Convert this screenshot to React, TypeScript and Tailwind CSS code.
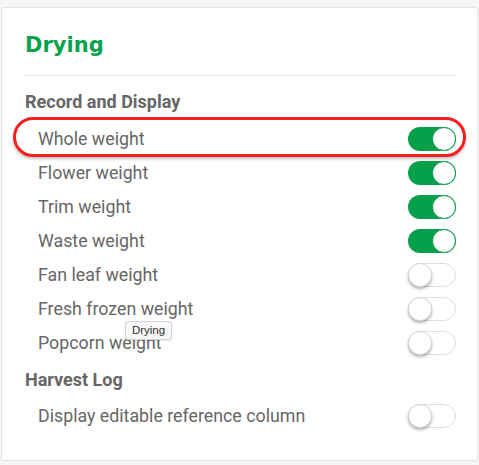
import React from "react";

type Item = { label: string; on: boolean; highlight?: boolean };

const recordItems: Item[] = [
  { label: "Whole weight", on: true, highlight: true },
  { label: "Flower weight", on: true },
  { label: "Trim weight", on: true },
  { label: "Waste weight", on: true },
  { label: "Fan leaf weight", on: false },
  { label: "Fresh frozen weight", on: false },
  { label: "Popcorn weight", on: false },
];

function Toggle({ on }: { on: boolean }) {
  if (on) {
    return (
      <div className="relative h-6 w-12 rounded-full bg-[#06a04b]">
        <div className="absolute right-0 top-0 h-6 w-6 rounded-full border border-[#0b9a48] bg-white" />
      </div>
    );
  }
  return (
    <div className="relative h-6 w-12 rounded-full border border-[#dedede] bg-white">
      <div className="absolute -left-px -top-px h-6 w-6 rounded-full border border-[#d6d6d6] bg-white shadow-[0_2px_3px_rgba(0,0,0,0.3)]" />
    </div>
  );
}

function Row({ item }: { item: Item }) {
  return (
    <div className="relative flex h-[34px] items-center justify-between">
      {item.highlight && (
        <div className="pointer-events-none absolute -bottom-px -left-3 -right-[10px] -top-[5px] rounded-full border-[3.5px] border-[#f51f1f] shadow-[0_2px_3px_rgba(0,0,0,0.25)]" />
      )}
      <span className="pl-[13px] text-[17.8px] text-[#666]">{item.label}</span>
      <Toggle on={item.on} />
    </div>
  );
}

export default function App() {
  return (
    <div
      className="relative min-h-screen bg-[#f6f6f6] px-px pt-[7px]"
      style={{ fontFamily: "Roboto, 'Noto Sans', sans-serif" }}
    >
      <div className="h-[454px] rounded-[3px] border border-[#e4e4e4] bg-white pl-[23px] pr-[21px] pt-[23px]">
        <h1
          className="h-7 text-[21px] font-bold leading-7 text-[#07a24c]"
          style={{ fontFamily: "'DejaVu Sans', sans-serif" }}
        >
          Drying
        </h1>
        <div className="mt-[16px] h-px bg-[#e6e6e6]" />

        <h2 className="mt-2 flex h-[34px] items-center text-[18px] font-bold text-[#666]">
          Record and Display
        </h2>
        <div className="mt-1">
          {recordItems.map((item) => (
            <Row key={item.label} item={item} />
          ))}
        </div>

        <h2 className="mt-[2px] flex h-[34px] items-center text-[18px] font-bold text-[#666]">
          Harvest Log
        </h2>
        <div className="mt-[3px]">
          <Row item={{ label: "Display editable reference column", on: false }} />
        </div>
      </div>

      <div
        className="absolute left-[125px] top-[321px] flex h-[19px] w-[47px] items-center justify-center rounded-[3px] border border-[#d4d4d4] bg-[#f8f8f8] text-[11.5px] text-[#333] shadow-[0_1px_2px_rgba(0,0,0,0.1)]"
        style={{ fontFamily: "'Liberation Sans', Arial, sans-serif" }}
      >
        Drying
      </div>
    </div>
  );
}
